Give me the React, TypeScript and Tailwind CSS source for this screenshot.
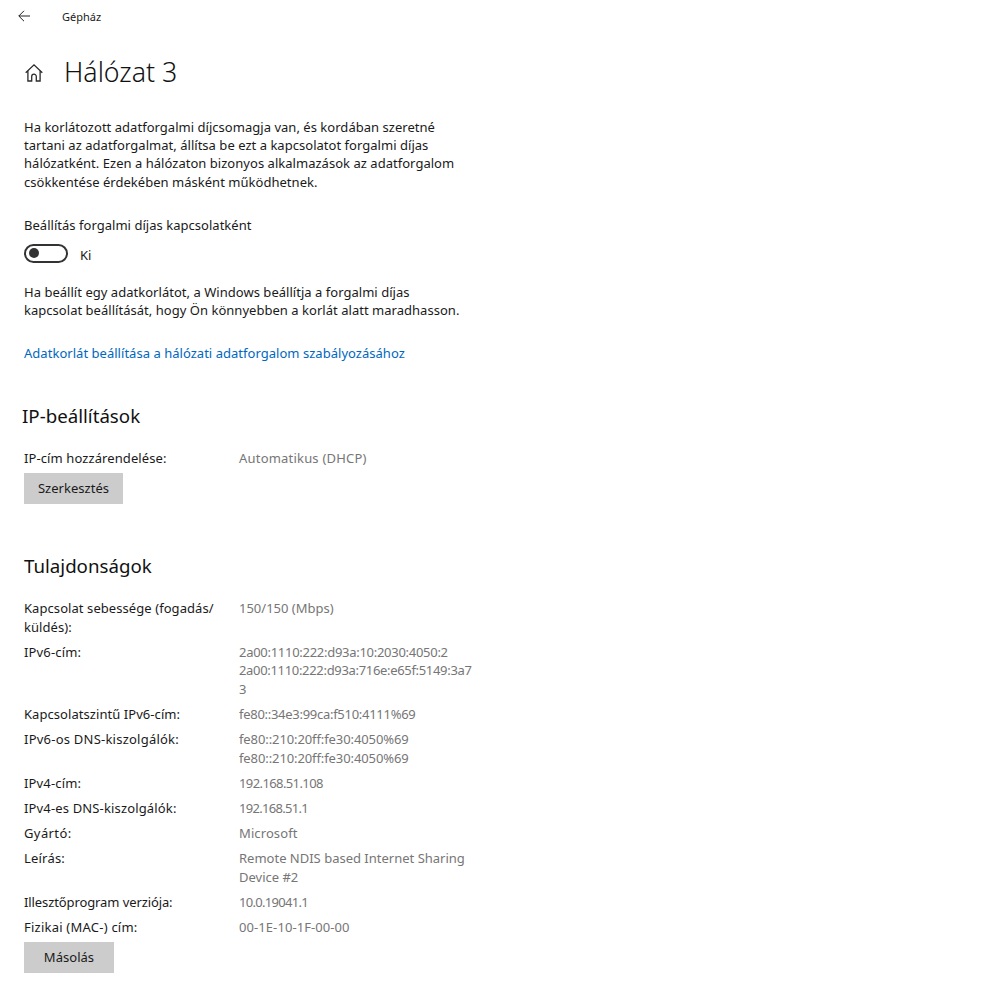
import React from "react";

type Row = { label: string[]; labelClass: string; value: string[]; valueClass: string[] };

const rows: Row[] = [
  { label: ["Kapcsolat sebessége (fogadás/", "küldés):"], labelClass: "tracking-[0.07px]", value: ["150/150 (Mbps)"], valueClass: ["tracking-[0px]"] },
  { label: ["IPv6-cím:"], labelClass: "tracking-[0.15px]", value: ["2a00:1110:222:d93a:10:2030:4050:2", "2a00:1110:222:d93a:716e:e65f:5149:3a7", "3"], valueClass: ["tracking-[-0.28px]", "tracking-[-0.32px]", "tracking-[0px]"] },
  { label: ["Kapcsolatszintű IPv6-cím:"], labelClass: "tracking-[0.06px]", value: ["fe80::34e3:99ca:f510:4111%69"], valueClass: ["tracking-[-0.28px]"] },
  { label: ["IPv6-os DNS-kiszolgálók:"], labelClass: "tracking-[0.23px]", value: ["fe80::210:20ff:fe30:4050%69", "fe80::210:20ff:fe30:4050%69"], valueClass: ["tracking-[-0.1px]", "tracking-[-0.1px]"] },
  { label: ["IPv4-cím:"], labelClass: "tracking-[0.15px]", value: ["192.168.51.108"], valueClass: ["tracking-[-0.6px]"] },
  { label: ["IPv4-es DNS-kiszolgálók:"], labelClass: "tracking-[0.15px]", value: ["192.168.51.1"], valueClass: ["tracking-[-0.7px]"] },
  { label: ["Gyártó:"], labelClass: "tracking-[0.4px]", value: ["Microsoft"], valueClass: ["tracking-[0.1px]"] },
  { label: ["Leírás:"], labelClass: "tracking-[0.2px]", value: ["Remote NDIS based Internet Sharing", "Device #2"], valueClass: ["tracking-[0px]", "tracking-[0px]"] },
  { label: ["Illesztőprogram verziója:"], labelClass: "tracking-[-0.1px]", value: ["10.0.19041.1"], valueClass: ["tracking-[-0.7px]"] },
  { label: ["Fizikai (MAC-) cím:"], labelClass: "tracking-[0.23px]", value: ["00-1E-10-1F-00-00"], valueClass: ["tracking-[0.08px]"] },
];

export default function App() {
  return (
    <div className="h-[988px] w-[1000px] overflow-hidden bg-white font-['Noto_Sans',sans-serif] text-[13px] leading-[18.5px] tracking-[0.03px] text-[#1a1a1a]">
      <div className="flex h-[32px] items-center">
        <svg className="ml-[18px]" width="12" height="12" viewBox="0 0 12 12" fill="none" stroke="#222" strokeWidth="1">
          <path d="M12 6H.8M6 .8.8 6 6 11.2" />
        </svg>
        <span className="ml-[32px] mt-[2px] text-[11px] tracking-normal">Gépház</span>
      </div>
      <div className="mt-[18px] flex h-[44px] items-center">
        <svg className="ml-[25px]" width="19" height="19" viewBox="0 0 19 19" fill="none" stroke="#2b2b2b" strokeWidth="1.3">
          <path d="M.7 9.8 9 1.8l8.3 8M2.9 8v10h3.8v-4.5a2.3 2.3 0 0 1 4.6 0V18h3.8V8" />
        </svg>
        <h1 className="ml-[20px] text-[26.7px] font-light tracking-normal text-[#111]">Hálózat 3</h1>
      </div>
      <div className="ml-[24px] mt-[23.6px]">
        <p className="leading-[18.33px]">
          Ha korlátozott adatforgalmi díjcsomagja van, és kordában szeretné
          <br />
          tartani az adatforgalmat, állítsa be ezt a kapcsolatot forgalmi díjas
          <br />
          hálózatként. Ezen a hálózaton bizonyos alkalmazások az adatforgalom
          <br />
          csökkentése érdekében másként működhetnek.
        </p>
        <div className="mt-[25.1px]">Beállítás forgalmi díjas kapcsolatként</div>
        <div className="mt-[9px] flex h-[19px] items-center">
          <div className="flex h-[19px] w-[44px] items-center rounded-full border-2 border-[#333] pl-[3px]">
            <div className="h-[10px] w-[10px] rounded-full bg-[#333]" />
          </div>
          <span className="ml-[12px] mt-[5px]">Ki</span>
        </div>
        <p className="mt-[20px]">
          Ha beállít egy adatkorlátot, a Windows beállítja a forgalmi díjas
          <br />
          kapcsolat beállítását, hogy Ön könnyebben a korlát alatt maradhasson.
        </p>
        <a className="mt-[24px] block text-[#0067c0]">Adatkorlát beállítása a hálózati adatforgalom szabályozásához</a>
        <h2 className="-ml-[2px] mt-[41px] text-[18.7px] leading-[26px] tracking-normal text-[#111]">IP-beállítások</h2>
        <div className="mt-[20px] flex">
          <div className="w-[215px] tracking-[0.1px]">IP-cím hozzárendelése:</div>
          <div className="tracking-[0.2px] text-[#767676]">Automatikus (DHCP)</div>
        </div>
        <button className="mt-[5px] flex h-[31px] w-[99px] items-center justify-center bg-[#cccccc]">Szerkesztés</button>
        <h2 className="mt-[49px] text-[18.7px] leading-[26px] tracking-normal text-[#111]">Tulajdonságok</h2>
        <div className="mt-[20.6px] flex flex-col gap-[6.67px]">
          {rows.map((r) => (
            <div key={r.label[0]} className="flex">
              <div className={`w-[215px] ${r.labelClass}`}>
                {r.label.map((t) => (
                  <div key={t} className="whitespace-nowrap">{t}</div>
                ))}
              </div>
              <div className="text-[#767676]">
                {r.value.map((t, i) => (
                  <div key={t} className={`whitespace-nowrap ${r.valueClass[i]}`}>{t}</div>
                ))}
              </div>
            </div>
          ))}
        </div>
        <button className="mt-[5.4px] flex h-[31px] w-[90px] items-center justify-center bg-[#cccccc]">Másolás</button>
      </div>
    </div>
  );
}
